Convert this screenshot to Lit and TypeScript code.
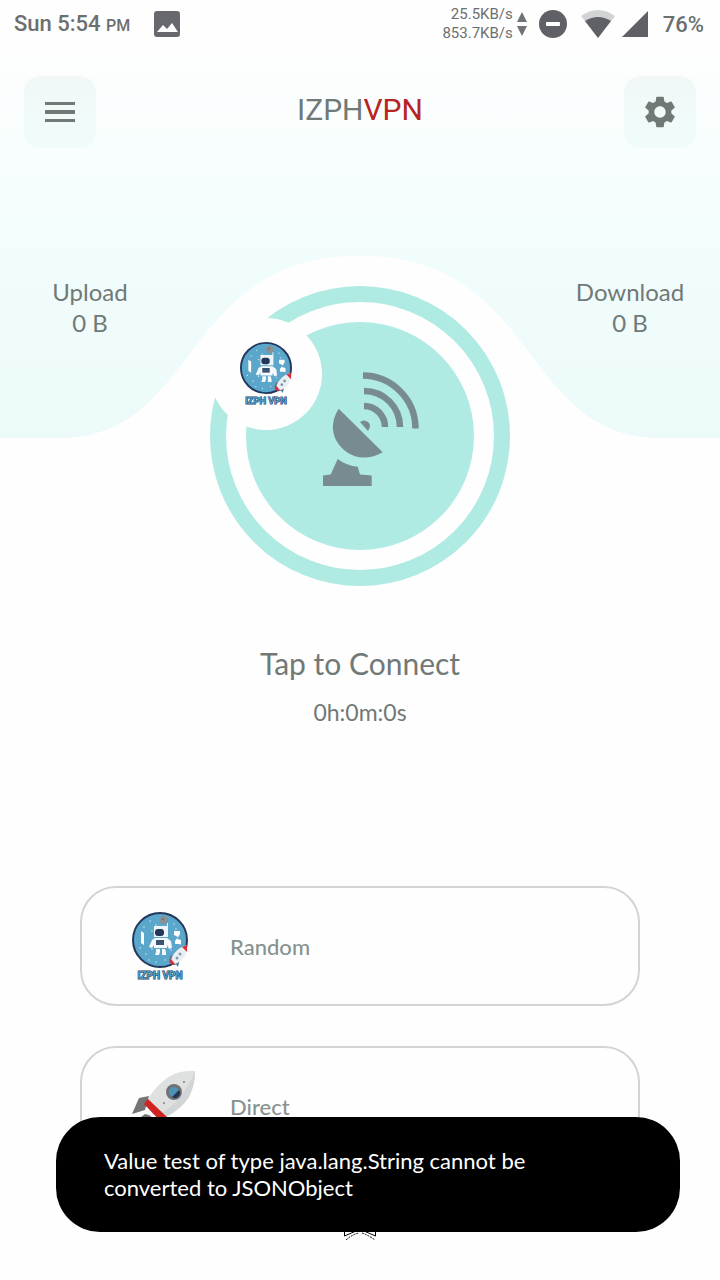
import { LitElement, css, html, svg } from 'lit'
import { customElement, property } from 'lit/decorators.js'

@customElement('vpn-logo')
export class VpnLogo extends LitElement {
  render() {
    return html`
      <svg class="logo" viewBox="0 0 56 68" role="img" aria-label="IZPH VPN">
        <circle cx="28" cy="28" r="27" fill="#5ba6cb" stroke="#22375a" stroke-width="2" />
        <g fill="#d8eef7">
          ${[[12, 15], [18, 9], [24, 13], [42, 12], [8, 36], [14, 42], [20, 37], [17, 48], [24, 50], [39, 38], [48, 32], [44, 17], [20, 19], [33, 48]].map(
            ([x, y]) => svg`<circle cx=${x} cy=${y} r="0.7" />`
          )}
        </g>
        <circle cx="32" cy="8" r="4" fill="#8b9093" />
        <circle cx="31" cy="7" r="1" fill="#6d7275" />
        <path d="M22 14h13v-3h1v14H22z" fill="#eef5f8" />
        <path d="M20 28l3-2h12l4 3 1 7-3 1-2-4v3H22v-3l-2 3-3-1z" fill="#f5f9fb" />
        <rect x="23" y="17" width="9" height="7" rx="3" fill="#22375a" />
        <rect x="24" y="28" width="8" height="5" fill="#3c5272" />
        <path d="M24 37h4v3l-1 3h-4l1-3zM30 37h3l1 3v3h-4z" fill="#f5f9fb" />
        <path d="M9 19l3 2v12l-3-2zM42 19h6v3l-3 5 4 1v4h-6v-3l3-4-4-2z" fill="#fff" />
        <path d="M45 46l3 1-2 8-3-4z" fill="#3f8fc0" />
        <path d="M39 43l8 9-6 1-4-5z" fill="#66707a" />
        <path d="M55 33c-8 2-14 8-16 15l4 4c8-3 13-10 12-19z" fill="#eceff1" />
        <path d="M55 33l-5 2 5 5z" fill="#d5303a" />
        <path d="M39 47l-2 3 4 3 2-1z" fill="#d5303a" />
        <circle cx="48" cy="42" r="1.5" fill="#7e9bb0" />
        <circle cx="45" cy="46" r="1.5" fill="#7e9bb0" />
        <text x="28" y="67" text-anchor="middle">IZPH VPN</text>
      </svg>
    `
  }

  static get styles() {
    return css`
      :host {
        display: block;
      }

      .logo {
        display: block;
        width: 100%;
      }

      text {
        font: 700 10px Roboto, sans-serif;
        fill: #4a9cc8;
        stroke: #22375a;
        stroke-width: 1px;
        paint-order: stroke;
      }
    `
  }
}

@customElement('status-bar')
export class StatusBar extends LitElement {
  render() {
    return html`
      <div class="bar">
        <span class="time">Sun 5:54 <small>PM</small></span>
        <svg class="picture" width="26" height="26" viewBox="0 0 26 26">
          <rect width="26" height="26" rx="3" fill="#68696f" />
          <path d="M3 21l6-7 4 4 5-6 6 9z" fill="#fff" />
        </svg>
        <div class="speed">
          <span>25.5KB/s</span>
          <span>853.7KB/s</span>
        </div>
        <svg class="arrows" width="10" height="24" viewBox="0 0 10 24">
          <path d="M5 0l5 10H0zM0 14h10L5 24z" fill="#707276" />
        </svg>
        <svg class="dnd" width="28" height="28" viewBox="0 0 28 28">
          <circle cx="14" cy="14" r="14" fill="#606167" />
          <rect x="7" y="12" width="14" height="4" rx="1" fill="#fff" />
        </svg>
        <svg class="wifi" width="34" height="28" viewBox="0 0 34 28">
          <path d="M0 6Q17-6 34 6L17 28z" fill="#d2d3d4" />
          <path d="M4 11Q17 3 30 11L17 28z" fill="#606167" />
        </svg>
        <svg class="signal" width="26" height="26" viewBox="0 0 26 26">
          <path d="M26 0v26H0z" fill="#606167" />
        </svg>
        <span class="battery">76%</span>
      </div>
    `
  }

  static get styles() {
    return css`
      :host {
        display: block;
      }

      .bar {
        display: flex;
        align-items: center;
        height: 48px;
        padding: 0 16px 0 14px;
        color: #6c6f70;
        font: 500 22px/28px Roboto, sans-serif;
      }

      .time,
      .battery {
        padding-top: 2px;
      }

      small {
        font-size: 16px;
      }

      .picture {
        margin-left: 24px;
      }

      .speed {
        display: flex;
        flex-direction: column;
        margin-left: auto;
        text-align: right;
        font: 400 15px/19px Roboto, sans-serif;
      }

      .arrows {
        margin-left: 4px;
      }

      .dnd {
        margin-left: 12px;
      }

      .wifi {
        margin-left: 14px;
      }

      .signal {
        margin-left: 7px;
      }

      .battery {
        margin-left: 15px;
      }
    `
  }
}

@customElement('traffic-stat')
export class TrafficStat extends LitElement {
  @property() label = ''
  @property() value = ''

  render() {
    return html`
      <span>${this.label}</span>
      <span>${this.value}</span>
    `
  }

  static get styles() {
    return css`
      :host {
        display: flex;
        flex-direction: column;
        align-items: center;
        color: #717977;
        font-size: 24px;
        line-height: 31px;
      }
    `
  }
}

@customElement('app-root')
export class AppRoot extends LitElement {
  render() {
    return html`
      <div class="page">
        <svg class="backdrop" viewBox="0 0 720 438" preserveAspectRatio="none" aria-hidden="true">
          <defs>
            <linearGradient id="mint" x1="0" y1="0" x2="0" y2="1">
              <stop offset="0.1" stop-color="#fefefe" />
              <stop offset="0.6" stop-color="#f1fdfc" />
              <stop offset="1" stop-color="#ecfaf9" />
            </linearGradient>
          </defs>
          <path d="M0 0H720V438H660C520 438 540 256 360 256S200 438 60 438H0z" fill="url(#mint)" />
        </svg>

        <div class="content">
          <status-bar></status-bar>

          <header>
            <button class="square" aria-label="Menu">
              <svg width="30" height="20" viewBox="0 0 30 20">
                <path d="M0 0h30v3H0zM0 8h30v4H0zM0 17h30v3H0z" fill="#717977" />
              </svg>
            </button>
            <h1>IZPH<span class="red">VPN</span></h1>
            <button class="square" aria-label="Settings">
              <svg width="38" height="38" viewBox="0 0 24 24">
                <path fill="#717977" d="M19.14 12.94c.04-.3.06-.61.06-.94 0-.32-.02-.64-.07-.94l2.03-1.58c.18-.14.23-.41.12-.61l-1.92-3.32c-.12-.22-.37-.29-.59-.22l-2.39.96c-.5-.38-1.03-.7-1.62-.94l-.36-2.54c-.04-.24-.24-.41-.48-.41h-3.84c-.24 0-.43.17-.47.41l-.36 2.54c-.59.24-1.13.57-1.62.94l-2.39-.96c-.22-.08-.47 0-.59.22L2.74 8.87c-.12.21-.08.47.12.61l2.03 1.58c-.05.3-.09.63-.09.94s.02.64.07.94l-2.03 1.58c-.18.14-.23.41-.12.61l1.92 3.32c.12.22.37.29.59.22l2.39-.96c.5.38 1.03.7 1.62.94l.36 2.54c.05.24.24.41.48.41h3.84c.24 0 .44-.17.47-.41l.36-2.54c.59-.24 1.13-.56 1.62-.94l2.39.96c.22.08.47 0 .59-.22l1.92-3.32c.12-.22.07-.47-.12-.61l-2.01-1.58zM12 15.6c-1.98 0-3.6-1.62-3.6-3.6s1.62-3.6 3.6-3.6 3.6 1.62 3.6 3.6-1.62 3.6-3.6 3.6z" />
              </svg>
            </button>
          </header>

          <section class="hero">
            <traffic-stat label="Upload" value="0 B"></traffic-stat>
            <div class="dial">
              <button class="connect" aria-label="Tap to Connect">
                <span class="disc">
                  <svg width="128" height="148" viewBox="-24 -8 128 148">
                    <g fill="none" stroke="#788b8e" stroke-width="6.5">
                      <path d="M43 5.5A53 53 0 0 1 95.500 58.500" />
                      <path d="M44 21A36 36 0 0 1 80 57" />
                      <path d="M44 36A21 21 0 0 1 65 57" />
                    </g>
                    <g fill="#788b8e">
                      <path d="M40 52Q44 49 48 52T48 61z" />
                      <path d="M18.7 38.7L62.7 82.3C48 91 32 88.5 22 78C11 67 10 52 18.7 38.7z" />
                      <path d="M17.7 89Q27 96 37.7 96.700L40 104.5L51.7 105.5V116H3V105.5L10.7 104.5z" />
                    </g>
                  </svg>
                </span>
              </button>
              <span class="badge"><vpn-logo class="small"></vpn-logo></span>
            </div>
            <traffic-stat label="Download" value="0 B"></traffic-stat>
          </section>

          <p class="state">Tap to Connect</p>
          <p class="timer">0h:0m:0s</p>

          <section class="servers">
            <button class="server">
              <span class="thumb"><vpn-logo class="large"></vpn-logo></span>
              Random
            </button>
            <button class="server">
              <span class="thumb">
                <svg width="64" height="70" viewBox="0 0 64 70">
                  <path d="M7 27L17 25L13 39L0 43z" fill="#737575" />
                  <path d="M9 46l4-3 4 1 12 9-4 7z" fill="#737575" />
                  <path d="M63 0Q50 -1 38 5Q25 13 16 28L34 46Q49 38 57 26Q63 14 63 0z" fill="#dfe1e1" />
                  <path d="M63 0Q63 14 57 26Q49 38 34 46L30 42Q52 28 63 0z" fill="#d2d5d5" />
                  <path d="M12 33L16 28L36 47L30 52z" fill="#cf2420" />
                  <circle cx="42" cy="21" r="8" fill="#6f7374" />
                  <circle cx="42" cy="21" r="5" fill="#4d93b8" />
                  <path d="M47 19a5 5 0 0 1-7 7z" fill="#24384f" />
                  <circle cx="52" cy="11" r="1" fill="#7d8080" />
                  <circle cx="32" cy="32" r="1" fill="#7d8080" />
                </svg>
              </span>
              Direct
            </button>
          </section>

          <svg class="handle" width="32" height="32" viewBox="0 0 32 32" aria-hidden="true">
            <path d="M0.500 20V26L12 21M31.500 20V26L20 21" fill="none" stroke="#000" />
            <path d="M2 30Q9 24 15 23M18 23Q24 25 31 30" fill="none" stroke="#000" stroke-dasharray="2 1" />
          </svg>
        </div>
      </div>

      <div class="toast" role="status">
        Value test of type java.lang.String cannot be converted to JSONObject
      </div>
    `
  }

  static get styles() {
    return css`
      :host {
        display: block;
        background: #fefefe;
        font-family: Lato, Roboto, sans-serif;
      }

      .page {
        display: grid;
        grid-template-columns: 100%;
        min-height: 100vh;
      }

      .backdrop,
      .content {
        grid-area: 1 / 1;
      }

      .backdrop {
        width: 100%;
        height: 438px;
      }

      .content {
        display: flex;
        flex-direction: column;
      }

      button {
        padding: 0;
        border: 0;
        font: inherit;
        cursor: pointer;
      }

      header {
        display: flex;
        align-items: center;
        justify-content: space-between;
        padding: 28px 24px 0;
      }

      .square {
        display: grid;
        place-items: center;
        width: 72px;
        height: 72px;
        border-radius: 16px;
        background: linear-gradient(#f1f8f7, #effcfb);
      }

      h1 {
        margin: 0;
        padding-bottom: 4px;
        color: #717977;
        font: 400 30px/36px Roboto, sans-serif;
      }

      .red {
        color: #b72422;
      }

      .hero {
        display: grid;
        grid-template-columns: 180px 1fr 180px;
        margin-top: 128px;
      }

      .dial {
        position: relative;
        justify-self: center;
        margin-top: 10px;
      }

      .connect {
        display: grid;
        place-items: center;
        width: 300px;
        height: 300px;
        border: 16px solid #afeae3;
        border-radius: 50%;
        background: #fefefe;
      }

      .disc {
        display: grid;
        place-items: center;
        width: 228px;
        height: 228px;
        border-radius: 50%;
        background: #afeae3;
      }

      .badge {
        position: absolute;
        top: 32px;
        left: 0;
        display: grid;
        place-items: center;
        width: 112px;
        height: 112px;
        border-radius: 50%;
        background: #fefefe;
      }

      .small {
        width: 52px;
      }

      .large {
        width: 56px;
      }

      .state,
      .timer {
        margin: 0;
        color: #717977;
        text-align: center;
      }

      .state {
        margin-top: 59px;
        font-size: 30px;
        line-height: 36px;
      }

      .timer {
        margin-top: 17px;
        font-size: 23px;
        line-height: 28px;
      }

      .servers {
        display: flex;
        flex-direction: column;
        gap: 40px;
        margin-top: 160px;
        padding: 0 80px;
      }

      .server {
        display: flex;
        align-items: center;
        gap: 34px;
        height: 120px;
        padding: 0 50px;
        border: 2px solid #d3d5d5;
        border-radius: 36px;
        background: #fefefe;
        color: #87928e;
        font-size: 22px;
        font-weight: 500;
      }

      .thumb {
        width: 64px;
      }

      .thumb svg {
        display: block;
      }

      .handle {
        align-self: center;
        margin-top: 44px;
      }

      .toast {
        position: fixed;
        right: 40px;
        bottom: 48px;
        left: 56px;
        box-sizing: border-box;
        padding: 30px 120px 31px 48px;
        border-radius: 44px;
        background: #000;
        color: #fff;
        font-size: 22px;
        line-height: 27px;
      }
    `
  }
}
